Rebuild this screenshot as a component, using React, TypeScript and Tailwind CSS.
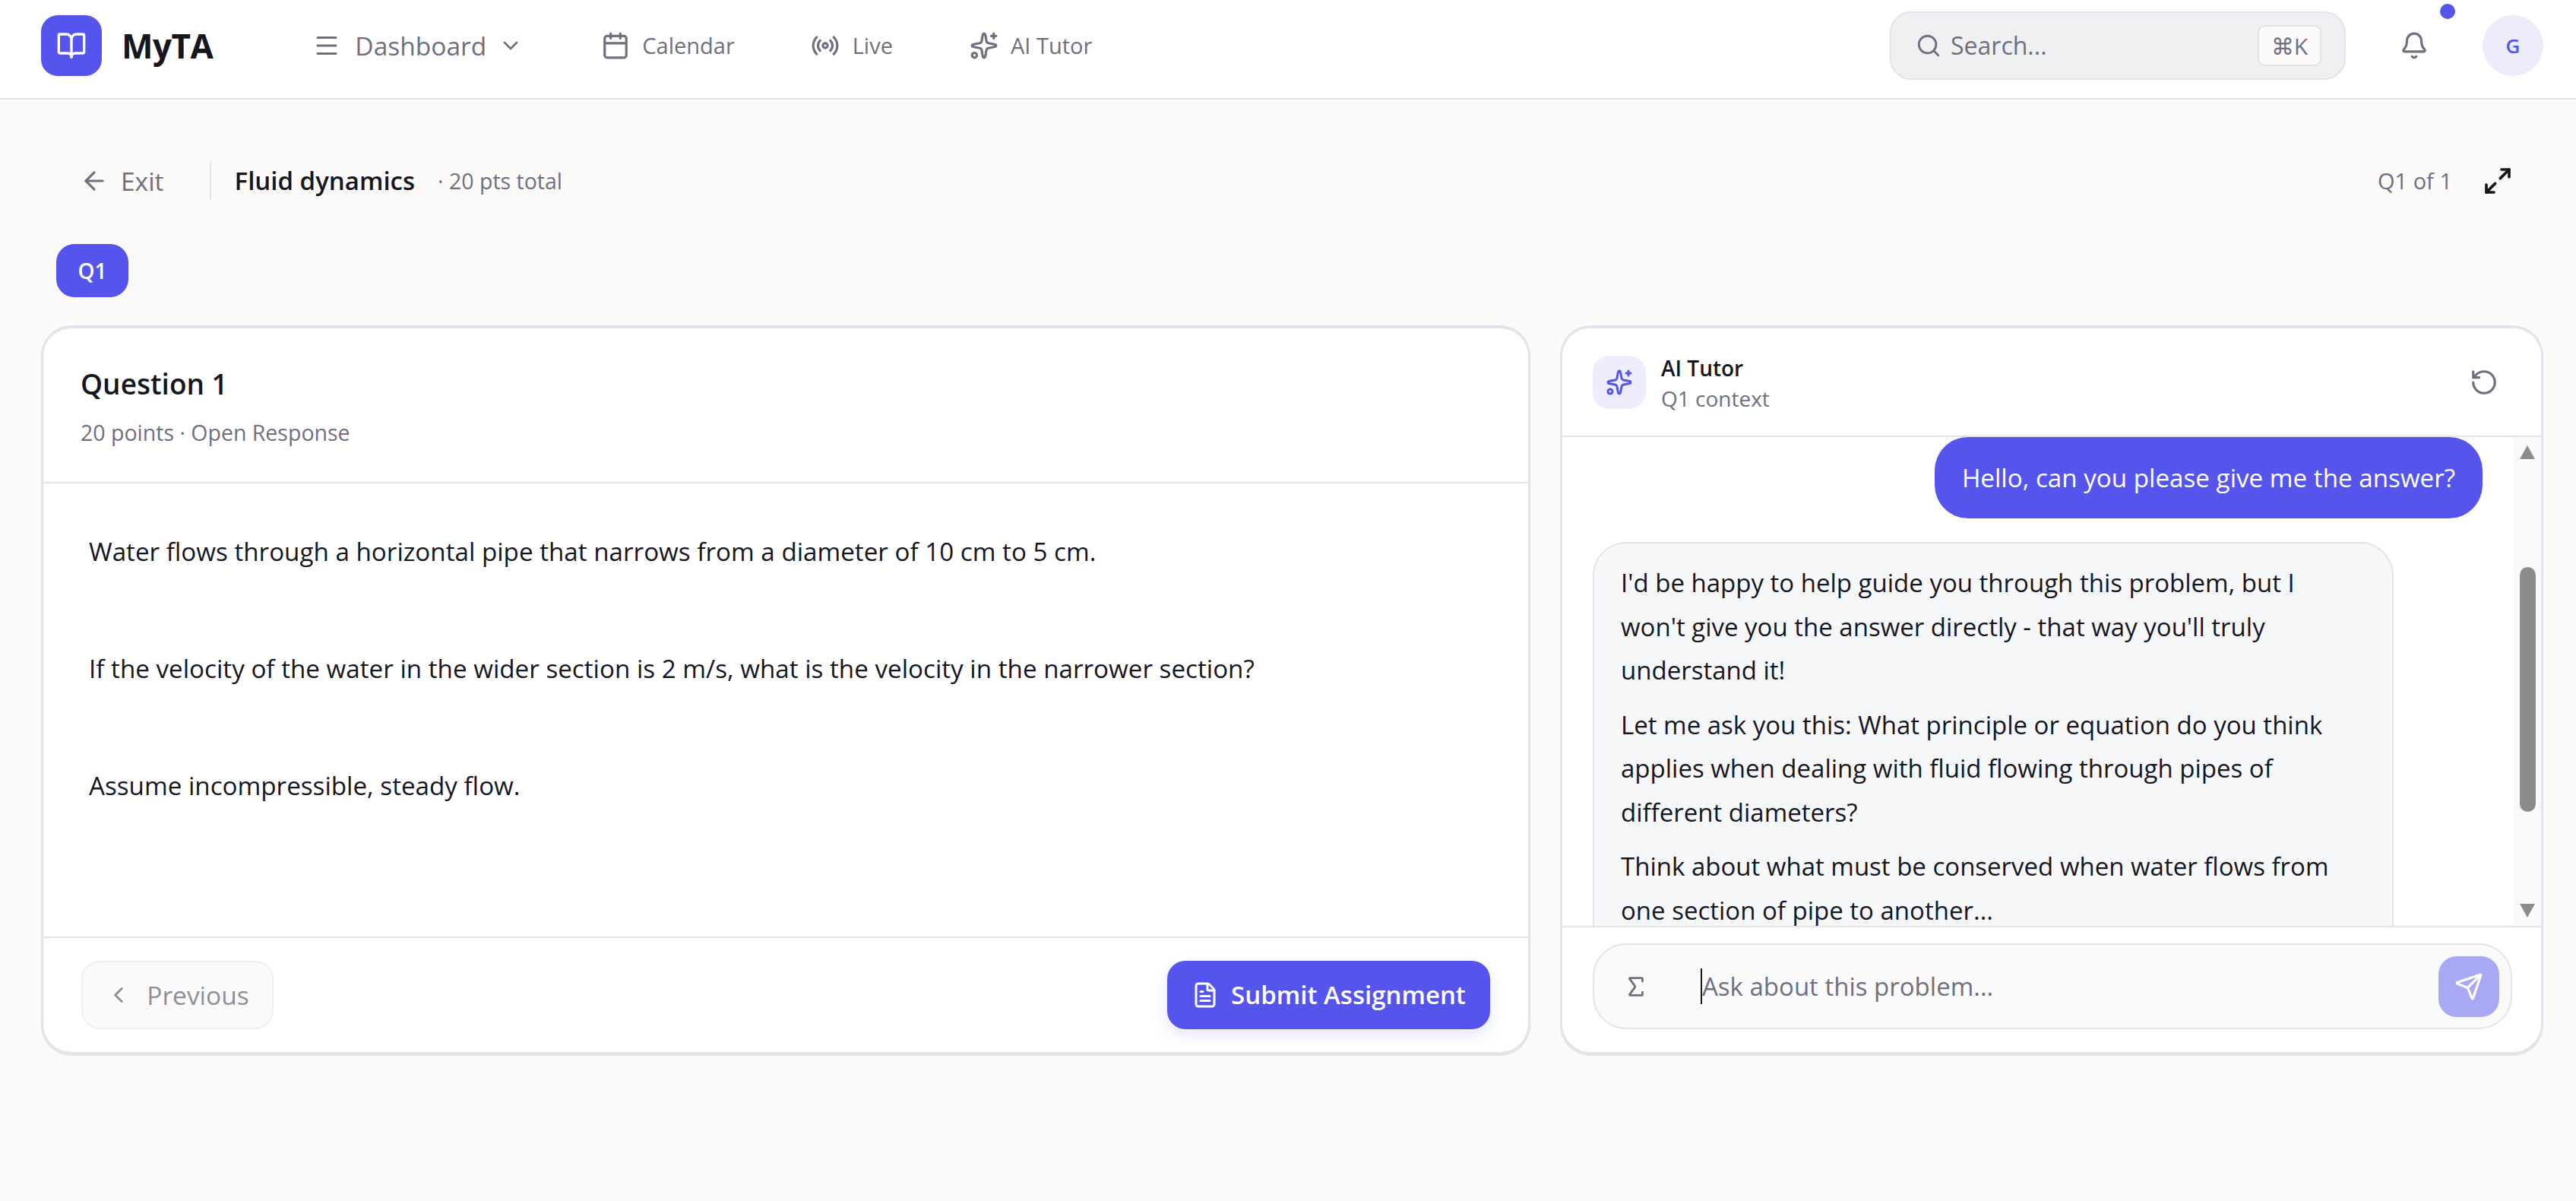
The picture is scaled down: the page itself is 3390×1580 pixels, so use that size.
import {
  ArrowLeft,
  Bell,
  BookOpen,
  Calendar,
  ChevronDown,
  ChevronLeft,
  FileText,
  Maximize2,
  Menu,
  Radio,
  RotateCcw,
  Search,
  Send,
  Sigma,
  Sparkles,
} from 'lucide-react'

const navItems = [
  {label: 'Calendar', icon: Calendar, gap: 'gap-[16px]', ml: 'ml-[103px]'},
  {label: 'Live', icon: Radio, gap: 'gap-[17px]', ml: 'ml-[100px]'},
  {label: 'AI Tutor', icon: Sparkles, gap: 'gap-[16px]', ml: 'ml-[101px]'},
]

const questionLines = [
  'Water flows through a horizontal pipe that narrows from a diameter of 10 cm to 5 cm.',
  'If the velocity of the water in the wider section is 2 m/s, what is the velocity in the narrower section?',
  'Assume incompressible, steady flow.',
]

function TopBar() {
  return (
    <header className="flex h-[131px] shrink-0 items-center border-b-2 border-[#e3e3ea] bg-white pb-[9px] pl-[54px] pr-[43px]">
      <div className="flex h-[80px] w-[80px] items-center justify-center rounded-[22px] bg-[#5555ee]">
        <BookOpen className="h-[40px] w-[40px] text-white" strokeWidth={2} />
      </div>
      <span className="ml-[26px] text-[44px] font-bold tracking-[-0.5px] text-[#16161f]">MyTA</span>

      <div className="ml-[132px] flex items-center text-[#6f6f7f]">
        <Menu className="h-[36px] w-[36px]" strokeWidth={2} />
        <span className="ml-[19px] text-[33.5px] font-medium">Dashboard</span>
        <ChevronDown className="ml-[16px] h-[32px] w-[32px]" strokeWidth={2} />
      </div>

      {navItems.map((item) => (
        <div key={item.label} className={`flex items-center text-[#6f6f7f] ${item.gap} ${item.ml}`}>
          <item.icon className="h-[38px] w-[38px]" strokeWidth={2} />
          <span className="text-[29px] font-medium">{item.label}</span>
        </div>
      ))}

      <div className="ml-auto flex h-[90px] w-[600px] items-center rounded-[28px] border-2 border-[#e3e3ea] bg-[#f0f0f3] pl-[32px] pr-[30px] text-[#6f6f7f]">
        <Search className="h-[34px] w-[34px]" strokeWidth={2} />
        <span className="ml-[12px] text-[32px]">Search...</span>
        <span className="ml-auto flex h-[54px] w-[84px] items-center justify-center rounded-[10px] border-2 border-[#e3e3ea] bg-[#fbfaf8] text-[30px]">
          ⌘K
        </span>
      </div>
      <div className="relative ml-[70px] flex h-[40px] w-[40px] items-center justify-center text-[#6f6f7f]">
        <Bell className="h-[38px] w-[38px]" strokeWidth={2} />
        <span className="absolute left-[54px] top-[-35px] h-[20px] w-[20px] rounded-full bg-[#5555ee]" />
      </div>
      <div className="ml-[70px] flex h-[80px] w-[80px] items-center justify-center rounded-full bg-[#ecebfc] text-[26px] font-semibold text-[#5555ee]">
        G
      </div>
    </header>
  )
}

function AssignmentBar() {
  return (
    <div className="flex h-[50px] items-center">
      <ArrowLeft className="ml-[51px] h-[38px] w-[38px] text-[#6f6f7f]" strokeWidth={2} />
      <span className="ml-[16px] text-[33.5px] font-medium text-[#6f6f7f]">Exit</span>
      <span className="ml-[60px] h-[50px] w-[2px] bg-[#e3e3ea]" />
      <span className="ml-[31px] text-[33px] font-semibold text-[#16161f]">Fluid dynamics</span>
      <span className="ml-[30px] text-[28.5px] text-[#6f6f7f]">· 20 pts total</span>
      <span className="ml-auto text-[29px] text-[#6f6f7f]">Q1 of 1</span>
      <Maximize2 className="ml-[40px] mr-[40px] h-[40px] w-[40px] text-[#16161f]" strokeWidth={2.2} />
    </div>
  )
}

function QuestionCard() {
  return (
    <section className="flex h-[959px] w-[1960px] shrink-0 flex-col rounded-[40px] border-[3px] border-t-[4px] border-[#e3e3ea] bg-white shadow-[0_2px_0_#e3e3ea]">
      <div className="h-[204px] shrink-0 border-b-2 border-[#e3e3ea] pl-[49px] pt-[47px]">
        <h2 className="text-[37px] font-semibold leading-[52px] text-[#16161f]">Question 1</h2>
        <p className="mt-[18px] text-[28.5px] leading-[40px] text-[#6f6f7f]">20 points · Open Response</p>
      </div>
      <div className="flex-1 pl-[60px] pt-[66px]">
        {questionLines.map((line) => (
          <p key={line} className="mb-[106px] text-[33.2px] leading-[48px] text-[#16161f]">
            {line}
          </p>
        ))}
      </div>
      <div className="flex h-[152px] shrink-0 items-center justify-between border-t-2 border-[#e3e3ea] px-[50px]">
        <button className="flex h-[90px] w-[253px] items-center justify-center gap-[20px] rounded-[24px] border-2 border-[#efeff3] bg-[#fafafa] text-[33.5px] font-medium text-[#8f8f99]">
          <ChevronLeft className="h-[34px] w-[34px]" strokeWidth={2} />
          Previous
        </button>
        <button className="flex h-[90px] w-[425px] items-center justify-center gap-[16px] rounded-[24px] bg-[#5555ee] text-[33px] font-semibold text-white shadow-[0_8px_20px_rgba(85,85,238,0.15)]">
          <FileText className="h-[36px] w-[36px]" strokeWidth={2} />
          Submit Assignment
        </button>
      </div>
    </section>
  )
}

function ChatScrollbar() {
  return (
    <div className="flex w-[36px] shrink-0 flex-col items-center bg-[#fafafa]">
      <svg viewBox="0 0 20 20" className="mt-[10px] h-[20px] w-[22px] text-[#8c8c8c]">
        <path d="M10 1 L20 19 L0 19 Z" fill="currentColor" />
      </svg>
      <div className="mt-[141px] h-[322px] w-[21px] rounded-full bg-[#8c8c8c]" />
      <svg viewBox="0 0 20 20" className="mt-auto mb-[10px] h-[20px] w-[22px] text-[#8c8c8c]">
        <path d="M0 1 L20 1 L10 19 Z" fill="currentColor" />
      </svg>
    </div>
  )
}

function TutorCard() {
  return (
    <section className="flex h-[959px] w-[1294px] shrink-0 flex-col overflow-hidden rounded-[40px] border-[3px] border-t-[4px] border-[#e3e3ea] bg-white shadow-[0_2px_0_#e3e3ea]">
      <div className="flex h-[143px] shrink-0 items-center border-b-2 border-[#e3e3ea] pl-[40px] pr-[56px]">
        <div className="flex h-[70px] w-[70px] items-center justify-center rounded-[22px] bg-[#eeedfd]">
          <Sparkles className="h-[36px] w-[36px] text-[#5555ee]" strokeWidth={2} />
        </div>
        <div className="ml-[20px] pt-[2px]">
          <p className="text-[28px] font-semibold leading-[38px] text-[#16161f]">AI Tutor</p>
          <p className="mt-[2px] text-[28px] leading-[38px] text-[#6f6f7f]">Q1 context</p>
        </div>
        <RotateCcw className="ml-auto h-[38px] w-[38px] text-[#6f6f7f]" strokeWidth={2} />
      </div>

      <div className="flex h-[643px] shrink-0 overflow-hidden">
        <div className="min-w-0 flex-1 overflow-hidden pl-[40px]">
          <div className="flex justify-end pr-[41px]">
            <div className="flex h-[107px] w-[721px] items-center justify-center rounded-[44px] bg-[#5555ee] text-[33.2px] text-white">
              Hello, can you please give me the answer?
            </div>
          </div>
          <div className="mt-[31px] w-[1054px] rounded-[44px] border-2 border-[#e3e3ea] bg-[#f6f7f9] pb-[30px] pl-[35px] pr-[45px] pt-[23px] text-[33px] leading-[57.5px] text-[#16161f]">
            <p>
              I'd be happy to help guide you through this problem, but I won't give you the answer
              directly - that way you'll truly understand it!
            </p>
            <p className="mt-[14px]">
              Let me ask you this: What principle or equation do you think applies when dealing with
              fluid flowing through pipes of different diameters?
            </p>
            <p className="mt-[14px]">
              Think about what must be conserved when water flows from one section of pipe to
              another...
            </p>
          </div>
        </div>
        <ChatScrollbar />
      </div>

      <div className="flex-1 border-t-2 border-[#e3e3ea] pl-[40px] pr-[38px] pt-[21px]">
        <div className="flex h-[113px] items-center rounded-[44px] border-2 border-[#e3e3ea] bg-[#fafafa] pl-[38px] pr-[15px]">
          <Sigma className="h-[34px] w-[34px] text-[#6f6f7f]" strokeWidth={2} />
          <span className="ml-[68px] h-[47px] w-[2px] bg-[#16161f]" />
          <span className="text-[33px] text-[#6f6f7f]">Ask about this problem...</span>
          <div className="ml-auto flex h-[80px] w-[80px] items-center justify-center rounded-[24px] bg-[#a9a8f5]">
            <Send className="h-[38px] w-[38px] text-white" strokeWidth={2} />
          </div>
        </div>
      </div>
    </section>
  )
}

export default function App() {
  return (
    <div className="flex h-[1580px] flex-col overflow-hidden bg-[#fbfaf8] font-['Open_Sans',sans-serif]">
      <TopBar />
      <main className="pl-[54px] pr-[43px] pt-[82px]">
        <AssignmentBar />
        <div className="ml-[20px] mt-[58px] flex h-[70px] w-[95px] items-center justify-center rounded-[24px] bg-[#5555ee] text-[28px] font-semibold text-white">
          Q1
        </div>
        <div className="mt-[37px] flex gap-[39px]">
          <QuestionCard />
          <TutorCard />
        </div>
      </main>
    </div>
  )
}
